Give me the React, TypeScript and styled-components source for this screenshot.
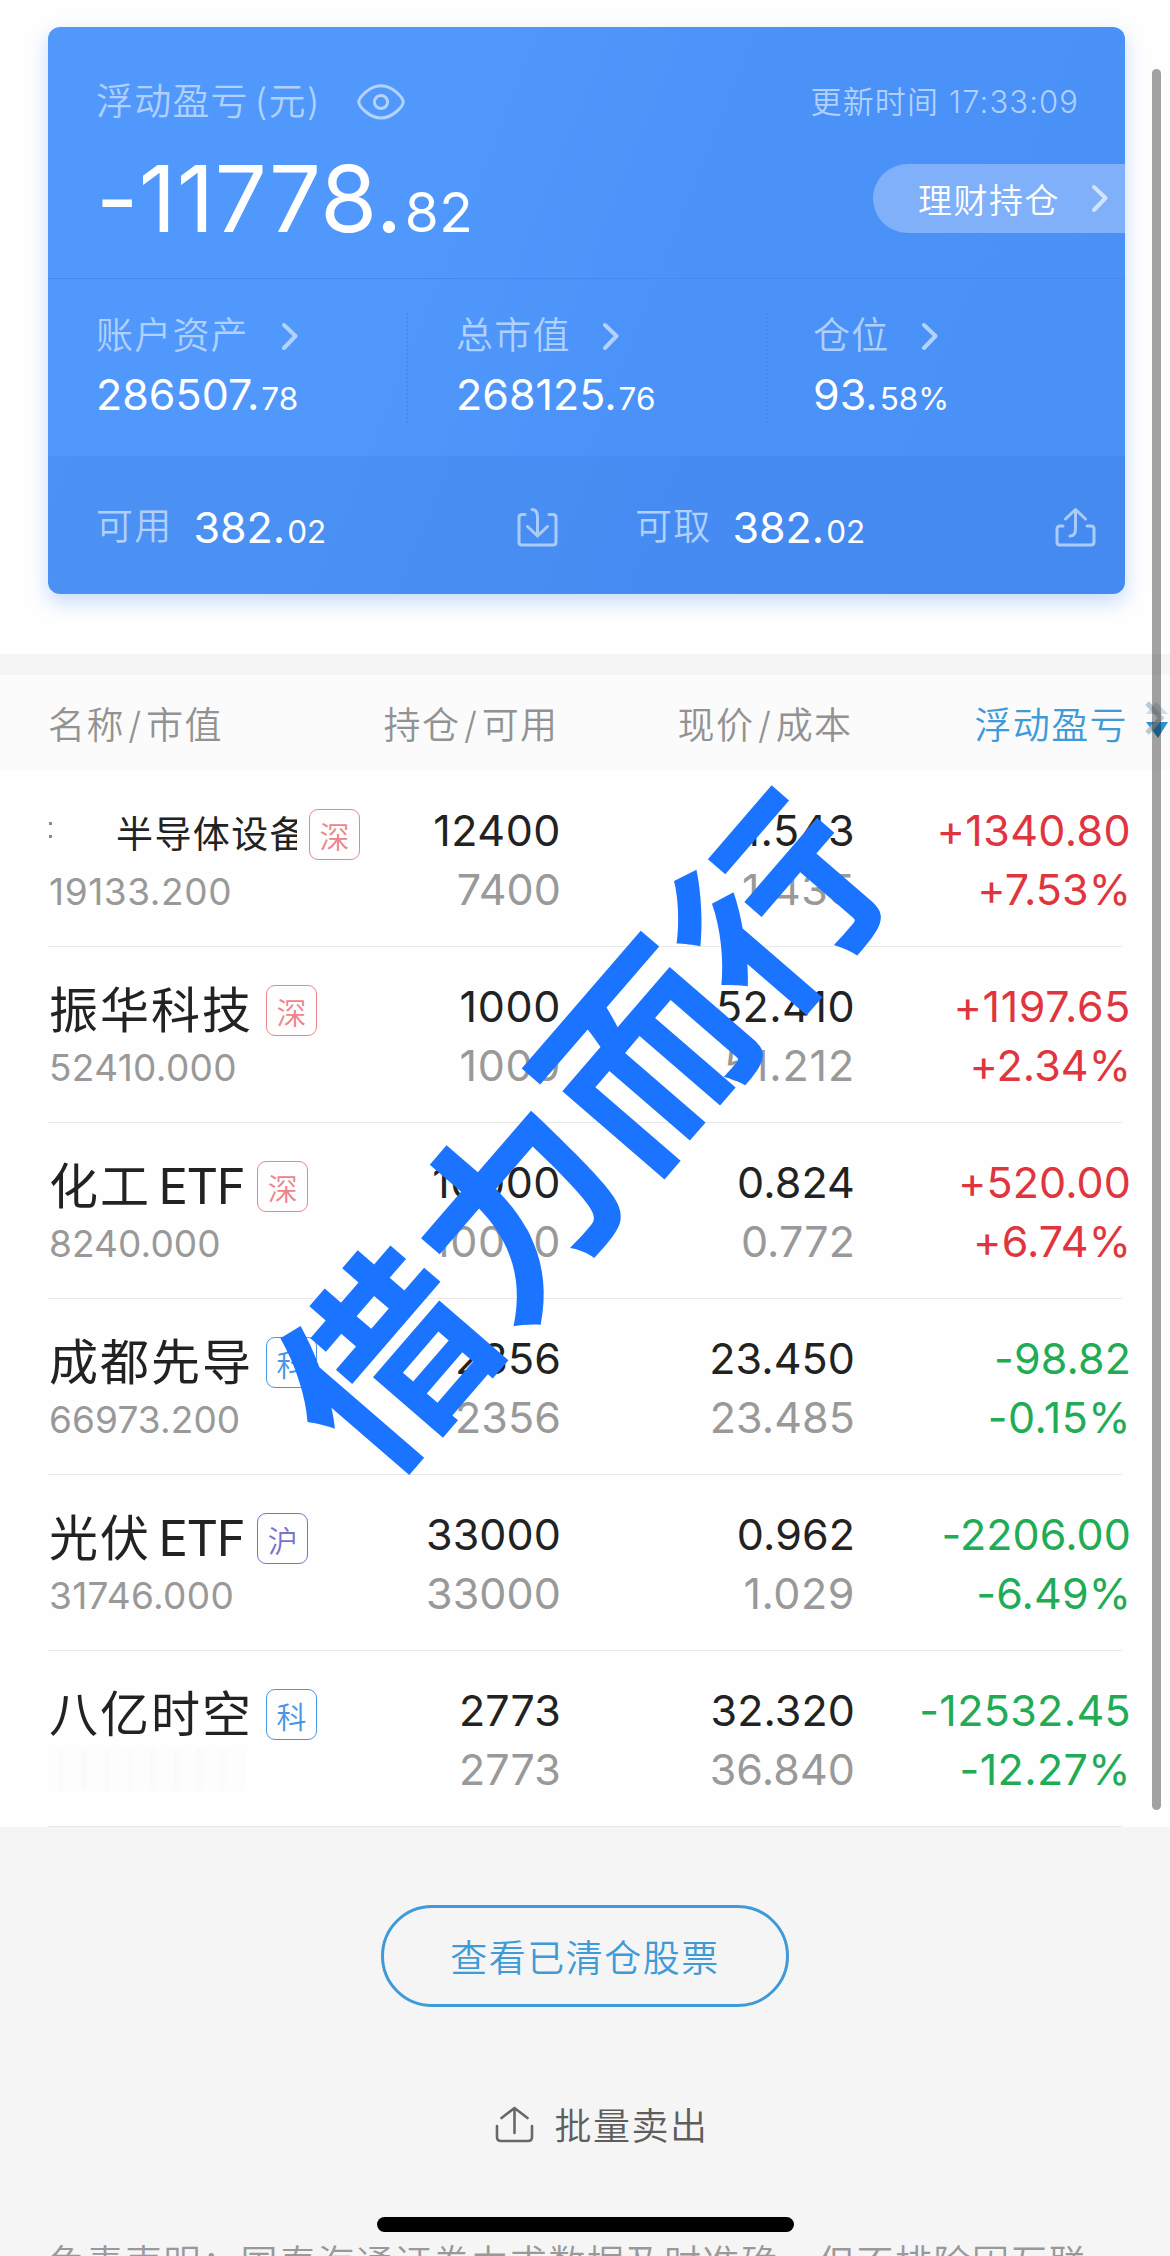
import React from "react";
import styled, { createGlobalStyle } from "styled-components";

const Global = createGlobalStyle`
  * { box-sizing: border-box; }
  body {
    margin: 0;
    background: #f5f5f5;
    font-family: Inter, "Noto Sans CJK SC", sans-serif;
    font-feature-settings: "calt" 0;
  }
`;

const Page = styled.main`
  position: relative;
  width: 1170px;
  height: 2256px;
  overflow: hidden;
  display: flex;
  flex-direction: column;
  background: #f5f5f5;
  > * { flex-shrink: 0; }
`;

const Hero = styled.section`
  height: 654px;
  padding: 27px 45px 60px 48px;
  background: #fefefe;
`;

const Card = styled.div`
  height: 567px;
  border-radius: 12px;
  overflow: hidden;
  background: linear-gradient(112deg, #5099fb 0%, #5098fb 34%, #4a91f8 62%, #4990f7 100%);
`;

const CardShadow = styled.div`
  border-radius: 12px;
  box-shadow: 0 8px 20px rgba(74, 145, 248, 0.32);
`;

const Summary = styled.div`
  height: 251px;
  padding: 50px 0 0 48px;
`;

const SummaryTop = styled.div`
  display: flex;
  align-items: center;
  height: 49px;
  padding-right: 46px;
`;

const Label = styled.span<{ $size?: number; $spacing?: number }>`
  font-size: ${(p) => p.$size ?? 37}px;
  letter-spacing: ${(p) => p.$spacing ?? 1.2}px;
  line-height: 44px;
  padding-top: 1px;
  font-weight: 350;
  color: #b0d0fd;
  white-space: pre;
`;

const Title = styled(Label)`
  word-spacing: -6px;
`;

const EyeIcon = styled.svg`
  width: 48px;
  height: 36px;
  margin-left: 36px;
`;

const Updated = styled(Label)`
  margin-left: auto;
`;

const SummaryMain = styled.div`
  display: flex;
  align-items: center;
  justify-content: space-between;
  height: 92px;
  margin-top: 26px;
`;

const Amount = styled.span<{ $size: number; $spacing?: number }>`
  font-size: ${(p) => p.$size}px;
  letter-spacing: ${(p) => p.$spacing ?? 0}px;
  color: #fff;
  white-space: nowrap;
`;

const Cents = styled.span<{ $size: number }>`
  margin-left: 2px;
  font-size: ${(p) => p.$size}px;
`;

const Pill = styled.button`
  display: flex;
  align-items: center;
  justify-content: space-between;
  width: 252px;
  height: 69px;
  padding: 0 17px 0 45px;
  border: 0;
  border-radius: 35px 0 0 35px;
  background: #7fb0f9;
  color: #fff;
  font: 350 34px Inter, "Noto Sans CJK SC", sans-serif;
  letter-spacing: 1.5px;
`;

const ChevronSvg = styled.svg<{ $gap?: number }>`
  width: 16px;
  height: 28px;
  margin-left: ${(p) => p.$gap ?? 0}px;
`;

const Stats = styled.div`
  display: grid;
  grid-template-columns: 360px 360px 357px;
  height: 178px;
  padding-top: 34px;
  border-top: 1px solid #4389ef;
`;

const Stat = styled.div<{ $indent: number }>`
  height: 110px;
  padding-left: ${(p) => p.$indent}px;
  border-right: 2px dotted #468be9;
  &:last-child { border-right: 0; }
`;

const StatLabel = styled.div`
  display: flex;
  align-items: center;
  height: 45px;
`;

const StatValue = styled.div`
  height: 44px;
  margin-top: 14px;
  line-height: 44px;
`;

const Funds = styled.div`
  display: grid;
  grid-template-columns: 539px 538px;
  height: 138px;
  background: rgba(50, 110, 200, 0.15);
`;

const Fund = styled.div`
  display: flex;
  align-items: center;
  padding: 3px 28px 0 48px;
  svg { margin-left: auto; width: 42px; height: 42px; }
`;

const FundValue = styled.span`
  margin-left: 21px;
`;

const cols = "312px 200px 294px 276px";

const TableHead = styled.div`
  display: grid;
  grid-template-columns: ${cols};
  align-items: center;
  height: 95px;
  margin-top: 21px;
  padding: 1px 0 0 48px;
  background: #fbfbfb;
`;

const HeadCell = styled.span<{ $active?: boolean; $left?: boolean }>`
  position: relative;
  font-size: 37px;
  letter-spacing: 1.4px;
  font-weight: 350;
  text-align: ${(p) => (p.$left ? "left" : "right")};
  padding-right: ${(p) => (p.$active ? 2 : 1.5)}px;
  color: ${(p) => (p.$active ? "#3f9ad8" : "#929292")};
`;

const Slash = styled.span`
  margin: 0 3.5px;
`;

const SortIcon = styled.svg`
  position: absolute;
  left: 290px;
  top: 3px;
  width: 26px;
  height: 40px;
`;

const List = styled.div`
  padding: 1px 48px 0;
  height: 1057px;
  background: #fefefe;
`;

const Row = styled.div`
  display: grid;
  grid-template-columns: ${cols};
  height: 176px;
  border-bottom: 1px solid #e8e8e8;
`;

const NameCell = styled.div`
  padding-top: 38px;
`;

const NameLine = styled.div`
  display: flex;
  align-items: center;
  height: 51px;
`;

const Name = styled.span`
  font-size: 49px;
  letter-spacing: 2px;
  line-height: 51px;
  color: #222;
  padding-left: 1px;
  white-space: nowrap;
`;

const Latin = styled.span`
  margin-left: 7.5px;
  letter-spacing: -1.4px;
`;

const ClippedName = styled.span`
  width: 181px;
  margin-left: 64px;
  overflow: hidden;
  font-size: 37px;
  letter-spacing: 1.4px;
  line-height: 51px;
  color: #222;
  white-space: nowrap;
`;

const Residue = styled.i`
  display: flex;
  flex-direction: column;
  gap: 10px;
  width: 4px;
  padding: 0 0 10px 1px;
  &::before, &::after { content: ""; height: 3px; background: #8a8a8a; }
`;

const Badge = styled.span<{ $tone: string; $gap: number }>`
  display: flex;
  align-items: center;
  justify-content: center;
  width: 51px;
  height: 51px;
  margin-left: ${(p) => p.$gap}px;
  border: 1.5px solid ${(p) => p.$tone};
  border-radius: 9px;
  color: ${(p) => p.$tone};
  font-size: 30px;
  font-weight: 350;
`;

const MarketValue = styled.div<{ $tracking: number }>`
  height: 50px;
  margin-top: 7px;
  padding-left: 1px;
  font-size: 37px;
  line-height: 50px;
  letter-spacing: ${(p) => p.$tracking}px;
  color: #999;
`;

const Smudge = styled.div`
  width: 196px;
  height: 42px;
  margin-top: 9px;
  background: repeating-linear-gradient(90deg, #fdfdfd 0 9px, #fafafa 12px 13px, #fdfdfd 18px 23px);
`;

const Figures = styled.div`
  display: flex;
  flex-direction: column;
  align-items: flex-end;
  padding-top: 30px;
  margin-right: -1px;
`;

const Figure = styled.span<{ $color: string; $tracking: number }>`
  height: 59px;
  line-height: 58px;
  font-size: 43px;
  letter-spacing: ${(p) => p.$tracking}px;
  color: ${(p) => p.$color};
  white-space: nowrap;
`;

const Footer = styled.footer`
  display: flex;
  flex-direction: column;
  align-items: center;
  padding-top: 78px;
`;

const ClearedButton = styled.button`
  width: 408px;
  height: 102px;
  border: 3px solid #3f9ad8;
  border-radius: 51px;
  background: transparent;
  color: #3f9ad8;
  font: 350 37px Inter, "Noto Sans CJK SC", sans-serif;
  letter-spacing: 1.5px;
`;

const BatchSell = styled.div`
  display: flex;
  align-items: center;
  gap: 20px;
  height: 48px;
  margin: 93px 0 0 33px;
  font-size: 37px;
  letter-spacing: 1.5px;
  font-weight: 350;
  color: #5e5e5e;
  svg { width: 40px; height: 38px; }
`;

const Disclaimer = styled.p`
  align-self: stretch;
  margin: 94px 0 0 48px;
  font-size: 37px;
  line-height: 44px;
  letter-spacing: 1.5px;
  font-weight: 350;
  color: #999;
  white-space: nowrap;
`;

const ScrollThumb = styled.div`
  position: absolute;
  left: 1152px;
  top: 69px;
  width: 9px;
  height: 1741px;
  border-radius: 5px;
  background: rgba(0, 0, 0, 0.36);
`;

const HomeIndicator = styled.div`
  position: absolute;
  left: 377px;
  top: 2217px;
  width: 417px;
  height: 15px;
  border-radius: 8px;
  background: #000;
`;

const Watermark = styled.div`
  position: absolute;
  left: 573px;
  top: 1125px;
  transform: translate(-50%, -50%) rotate(-49.2deg);
  font: 700 200px/200px "Noto Sans CJK SC", sans-serif;
  color: #1a74ff;
  white-space: nowrap;
`;

const Chevron = ({ gap, color = "#b3d2fd" }: { gap?: number; color?: string }) => (
  <ChevronSvg $gap={gap} viewBox="0 0 16 28" fill="none" stroke={color} strokeWidth="4" strokeLinecap="round" strokeLinejoin="round">
    <path d="M2 3 L13.5 14 L2 26" />
  </ChevronSvg>
);

const Money = ({ value, size = 43, small = 31.5, spacing = 0 }: { value: string; size?: number; small?: number; spacing?: number }) => {
  const dot = value.indexOf(".") + 1;
  return (
    <Amount $size={size} $spacing={spacing}>
      {value.slice(0, dot)}
      <Cents $size={small}>{value.slice(dot)}</Cents>
    </Amount>
  );
};

// Narrow "1" glyphs get a little extra tracking so the columns keep an even rhythm.
const tracking = (text: string) => 0.1 + ((text.split("1").length - 1) * 2.2) / text.length;

const RED = "#e0353f";
const GREEN = "#22ab55";
const SHEN = "#ee848c";
const KE = "#4795e6";
const HU = "#7473cf";

type Holding = {
  name: string;
  latin?: string;
  clipped?: boolean;
  badge: string;
  tone: string;
  value?: string;
  qty: string;
  avail: string;
  price: string;
  cost: string;
  gain: string;
  rate: string;
};

const holdings: Holding[] = [
  { name: "半导体设备", clipped: true, badge: "深", tone: SHEN, value: "19133.200", qty: "12400", avail: "7400", price: "1.543", cost: "1.435", gain: "+1340.80", rate: "+7.53%" },
  { name: "振华科技", badge: "深", tone: SHEN, value: "52410.000", qty: "1000", avail: "1000", price: "52.410", cost: "51.212", gain: "+1197.65", rate: "+2.34%" },
  { name: "化工", latin: "ETF", badge: "深", tone: SHEN, value: "8240.000", qty: "10000", avail: "10000", price: "0.824", cost: "0.772", gain: "+520.00", rate: "+6.74%" },
  { name: "成都先导", badge: "科", tone: KE, value: "66973.200", qty: "2356", avail: "2356", price: "23.450", cost: "23.485", gain: "-98.82", rate: "-0.15%" },
  { name: "光伏", latin: "ETF", badge: "沪", tone: HU, value: "31746.000", qty: "33000", avail: "33000", price: "0.962", cost: "1.029", gain: "-2206.00", rate: "-6.49%" },
  { name: "八亿时空", badge: "科", tone: KE, qty: "2773", avail: "2773", price: "32.320", cost: "36.840", gain: "-12532.45", rate: "-12.27%" },
];

const Pair = ({ top, bottom, color, subColor }: { top: string; bottom: string; color: string; subColor: string }) => (
  <Figures>
    <Figure $color={color} $tracking={tracking(top)}>{top}</Figure>
    <Figure $color={subColor} $tracking={tracking(bottom)}>{bottom}</Figure>
  </Figures>
);

const HoldingRow = ({ h }: { h: Holding }) => {
  const tone = h.gain.startsWith("+") ? RED : GREEN;
  return (
    <Row>
      <NameCell>
        <NameLine>
          {h.clipped ? (
            <>
              <Residue />
              <ClippedName>{h.name}</ClippedName>
            </>
          ) : (
            <Name>
              {h.name}
              {h.latin && <Latin>{h.latin}</Latin>}
            </Name>
          )}
          <Badge $tone={h.tone} $gap={h.clipped ? 12 : 13}>{h.badge}</Badge>
        </NameLine>
        {h.value ? <MarketValue $tracking={tracking(h.value)}>{h.value}</MarketValue> : <Smudge />}
      </NameCell>
      <Pair top={h.qty} bottom={h.avail} color="#222" subColor="#999" />
      <Pair top={h.price} bottom={h.cost} color="#222" subColor="#999" />
      <Pair top={h.gain} bottom={h.rate} color={tone} subColor={tone} />
    </Row>
  );
};

export default function App() {
  return (
    <Page>
      <Global />
      <Hero>
        <CardShadow>
          <Card>
            <Summary>
              <SummaryTop>
                <Title>浮动盈亏 (元)</Title>
                <EyeIcon viewBox="0 0 48 36" fill="none" stroke="#b3d2fd" strokeWidth="3">
                  <path d="M1.8 18 C1.8 14 12 1.8 24 1.8 S46.2 14 46.2 18 S36 34 24 34 S1.8 22 1.8 18 Z" />
                  <circle cx="24" cy="18" r="6.6" />
                </EyeIcon>
                <Updated $size={31} $spacing={1.1}>更新时间 17:33:09</Updated>
              </SummaryTop>
              <SummaryMain>
                <Money value="-11778.82" size={92} small={55} spacing={0.5} />
                <Pill>
                  理财持仓
                  <Chevron color="#d2e4fd" />
                </Pill>
              </SummaryMain>
            </Summary>
            <Stats>
              <Stat $indent={48}>
                <StatLabel><Label>账户资产</Label><Chevron gap={33} /></StatLabel>
                <StatValue><Money value="286507.78" /></StatValue>
              </Stat>
              <Stat $indent={48}>
                <StatLabel><Label>总市值</Label><Chevron gap={32} /></StatLabel>
                <StatValue><Money value="268125.76" /></StatValue>
              </Stat>
              <Stat $indent={45}>
                <StatLabel><Label>仓位</Label><Chevron gap={33} /></StatLabel>
                <StatValue><Money value="93.58%" /></StatValue>
              </Stat>
            </Stats>
            <Funds>
              <Fund>
                <Label>可用</Label>
                <FundValue><Money value="382.02" /></FundValue>
                <svg viewBox="0 0 42 42" fill="none" stroke="#abcbf8" strokeWidth="3" strokeLinecap="round" strokeLinejoin="round">
                  <path d="M8 8.5 H5 Q2 8.5 2 11.5 V36 Q2 39 5 39 H36 Q39 39 39 36 V11.5 Q39 8.5 36 8.5 H32" />
                  <path d="M15 3.5 Q20.5 3.5 20.5 11 V30 M10.500 20.500 L20.5 30 L30.500 20.500" />
                </svg>
              </Fund>
              <Fund>
                <Label>可取</Label>
                <FundValue><Money value="382.02" /></FundValue>
                <svg viewBox="0 0 42 42" fill="none" stroke="#abcbf8" strokeWidth="3" strokeLinecap="round" strokeLinejoin="round">
                  <path d="M8 20 H5 Q2 20 2 23 V36 Q2 39 5 39 H36 Q39 39 39 36 V23 Q39 20 36 20 H32" />
                  <path d="M15 30 Q20.5 30 20.5 23 V3.500 M10.500 13 L20.5 3.500 L30.500 13" />
                </svg>
              </Fund>
            </Funds>
          </Card>
        </CardShadow>
      </Hero>

      <TableHead>
        <HeadCell $left>名称<Slash>/</Slash>市值</HeadCell>
        <HeadCell>持仓<Slash>/</Slash>可用</HeadCell>
        <HeadCell>现价<Slash>/</Slash>成本</HeadCell>
        <HeadCell $active>
          浮动盈亏
          <SortIcon viewBox="0 0 26 40">
            <path d="M2 15 L12 3 L24 15 Z" fill="#d3dbe2" />
            <path d="M2 23 H24 L14 39 Z" fill="#2e90cf" />
            <path d="M3 4 L17 19 L3 34" fill="none" stroke="#a9b9c6" strokeWidth="5" opacity="0.75" />
          </SortIcon>
        </HeadCell>
      </TableHead>

      <List>
        {holdings.map((h) => (
          <HoldingRow key={h.name} h={h} />
        ))}
      </List>

      <Footer>
        <ClearedButton>查看已清仓股票</ClearedButton>
        <BatchSell>
          <svg viewBox="0 0 40 38" fill="none" stroke="#686868" strokeWidth="2.6" strokeLinecap="round" strokeLinejoin="round">
            <path d="M2 21 V32 Q2 36 6 36 H33 Q37 36 37 32 V21" />
            <path d="M19.500 28 V3 M6.500 13 L19.500 3 L32.500 13" />
          </svg>
          批量卖出
        </BatchSell>
        <Disclaimer>免责声明：国泰海通证券力求数据及时准确，但不排除因互联</Disclaimer>
      </Footer>

      <Watermark>借力而行</Watermark>
      <ScrollThumb />
      <HomeIndicator />
    </Page>
  );
}
